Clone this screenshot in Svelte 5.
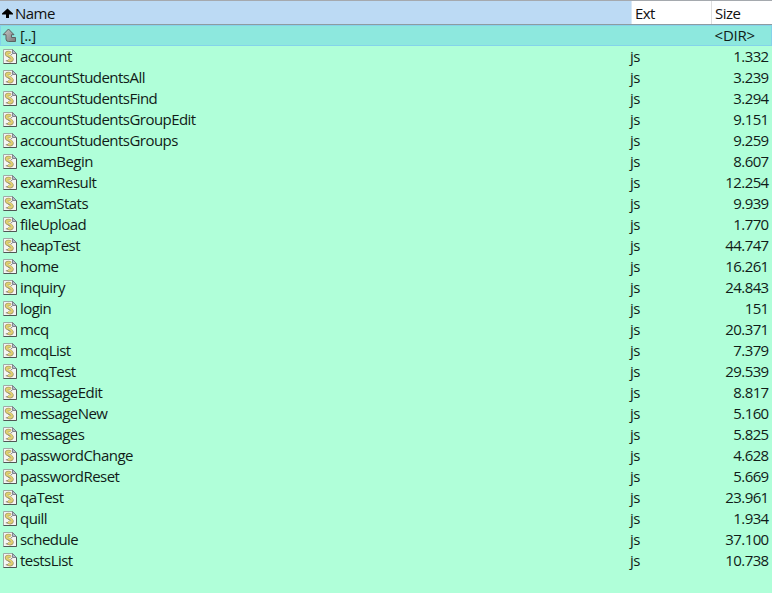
<script>
  const files = [
    ['account', '1.332'], ['accountStudentsAll', '3.239'], ['accountStudentsFind', '3.294'],
    ['accountStudentsGroupEdit', '9.151'], ['accountStudentsGroups', '9.259'], ['examBegin', '8.607'],
    ['examResult', '12.254'], ['examStats', '9.939'], ['fileUpload', '1.770'], ['heapTest', '44.747'],
    ['home', '16.261'], ['inquiry', '24.843'], ['login', '151'], ['mcq', '20.371'], ['mcqList', '7.379'],
    ['mcqTest', '29.539'], ['messageEdit', '8.817'], ['messageNew', '5.160'], ['messages', '5.825'],
    ['passwordChange', '4.628'], ['passwordReset', '5.669'], ['qaTest', '23.961'], ['quill', '1.934'],
    ['schedule', '37.100'], ['testsList', '10.738']
  ];
</script>

<div class="panel">
  <header>
    <div class="head name">
      <svg width="11" height="11" viewBox="0 0 11 11"><path d="M5.5 0.5L11 5.5V6.5H7V10H4V6.5H0V5.5Z" fill="#000" /></svg>
      <span class="t">Name</span>
    </div>
    <div class="head ext"><span class="t">Ext</span></div>
    <div class="head size"><span class="t">Size</span></div>
  </header>
  <div class="row up">
    <svg class="icon" width="16" height="16" viewBox="0 0 16 16">
      <defs><linearGradient id="g" x1="0" y1="0" x2="1" y2="1"><stop offset="0" stop-color="#c8c8c8" /><stop offset="1" stop-color="#7c7c7c" /></linearGradient></defs>
      <path d="M6.5 1L12 6.7H9.5V9.5H13.5V13.5H6.5Q4 13.5 4 11V6.7H1Z" fill="url(#g)" stroke="#5c6262" stroke-linejoin="round" />
    </svg>
    <span class="label t">[..]</span>
    <span class="ext"></span>
    <span class="num dir"><span>&lt;DIR&gt;</span></span>
  </div>
  {#each files as [name, size]}
    <div class="row">
      <svg class="icon" width="16" height="16" viewBox="0 0 16 16">
        <path d="M1.5 .5H10.5L14.5 4.5V14.5H1.5Z" fill="#f6f5f4" stroke="#a0aaa6" />
        <path d="M14.5 4.5V14.5H1.5" fill="none" stroke="#4f5754" />
        <path d="M10.5 .5V4.5H14.5Z" fill="#b4bcc8" stroke="#69727a" stroke-width=".8" />
        <path d="M8.8 4.2C6.5 2.3 3.4 3.6 4.4 5.5C5.3 7.2 9.8 7.4 10.3 9.8C10.7 12 7.6 12.7 5.7 11.2" fill="none" stroke="#aaa06c" stroke-width="2.8" />
        <path d="M8.6 4C6.6 2.7 3.8 3.9 4.7 5.3C5.5 6.8 9.7 7.3 10.1 9.7C10.4 11.4 7.6 12.1 6 11" fill="none" stroke="#e3d36f" stroke-width="1.7" />
        <path d="M6.2 7.8L8 9.7M10.3 5.2L8.5 6.3M3.8 11.8H6" stroke="#85846f" />
      </svg>
      <span class="label t">{name}</span>
      <span class="ext"><span class="t">js</span></span>
      <span class="num"><span class="n">{size}</span></span>
    </div>
  {/each}
</div>

<style>
  :global(body) { margin: 0; }
  .panel {
    width: 772px; height: 593px; overflow: hidden; background: #b0ffd9;
    font-family: "Open Sans", "Noto Sans", sans-serif; font-size: 15px; color: #101c18;
  }
  header {
    display: flex; height: 25px; box-sizing: border-box; background: #fff;
    border-top: 1px solid #a5a9ae; border-bottom: 1px solid #8d9ba0;
  }
  .head { display: flex; align-items: center; box-sizing: border-box; padding-left: 3px; color: #111; line-height: 25px; padding-top: 2px; }
  .head.name { width: 632px; padding-left: 2px; gap: 2px; background: #bcdaf4; border-right: 1px solid #d9e8f5; }
  .head.ext { width: 80px; border-right: 1px solid #dedede; }
  .head.size { width: 60px; }
  .row { display: flex; align-items: center; height: 21px; line-height: 21px; box-sizing: border-box; padding-left: 2px; padding-right: 4px; white-space: nowrap; }
  .row.up { background: #8de8de; box-shadow: inset 0 0 0 1px #84d3ea; }
  .icon { flex: none; margin-right: 2px; }
  .label { flex: 1; }
  .row .ext { width: 80px; }
  .num { width: 58px; text-align: right; }
  .dir { padding-right: 13px; width: 45px; letter-spacing: -0.2px; }
  .t { letter-spacing: -0.54px; }
  .n { letter-spacing: -0.6px; margin-right: -0.6px; }
</style>
